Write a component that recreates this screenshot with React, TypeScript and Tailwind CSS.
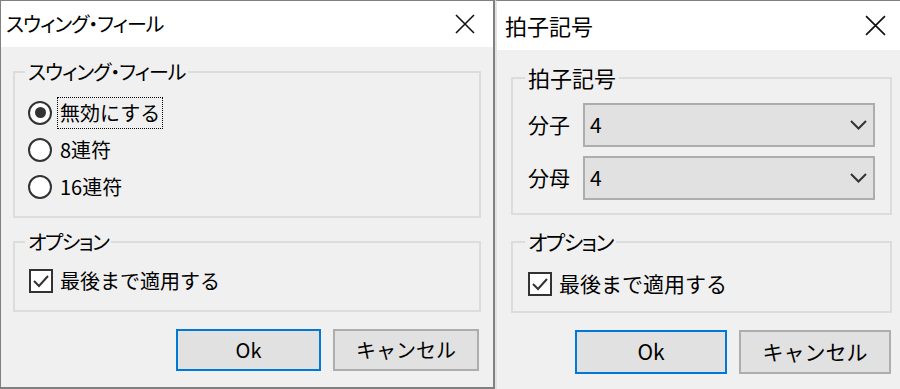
import React from "react";
import clsx from "clsx";

const jp = "font-['Noto_Sans_CJK_JP','Noto_Sans',sans-serif]";
const palt = "[font-feature-settings:'palt']";

const CloseIcon = ({ size }: { size: number }) => (
  <svg width={size} height={size} viewBox="0 0 20 20">
    <path d="M1 1 L19 19 M19 1 L1 19" stroke="#111" strokeWidth="1.6" fill="none" />
  </svg>
);

const Radio = ({ checked, label, focus }: { checked?: boolean; label: string; focus?: boolean }) => (
  <div className="flex h-[37px] items-center">
    <span className="flex h-[24px] w-[24px] items-center justify-center rounded-full border-2 border-[#333] bg-white">
      {checked && <span className="h-[11px] w-[11px] rounded-full bg-[#333]" />}
    </span>
    <span
      className={clsx(
        "ml-[5px] border px-[2px] leading-[30px]",
        focus ? "border-dotted border-black" : "border-transparent"
      )}
    >
      {label}
    </span>
  </div>
);

const Checkbox = ({ label, size }: { label: string; size: string }) => (
  <div className={clsx("flex items-center", size)}>
    <span className="flex h-[24px] w-[24px] items-center justify-center border-2 border-[#333] bg-white">
      <svg width="18" height="16" viewBox="0 0 18 16">
        <path d="M2 8 L7 13 L16 3" stroke="#333" strokeWidth="2" fill="none" />
      </svg>
    </span>
    <span className="ml-[7px]">{label}</span>
  </div>
);

const Combo = ({ label }: { label: string }) => (
  <div className="flex items-center">
    <span className="w-[55px]">{label}</span>
    <div className="flex h-[44px] flex-1 items-center justify-between border-2 border-[#adadad] bg-[#e1e1e1] pl-[5px] pr-[6px]">
      <span>4</span>
      <svg width="17" height="10" viewBox="0 0 17 10">
        <path d="M1 1 L8.5 8.5 L16 1" stroke="#333" strokeWidth="2" fill="none" />
      </svg>
    </div>
  </div>
);

export default function App() {
  return (
    <div className={clsx("flex h-[389px] w-[900px] overflow-hidden bg-[#f0f0f0] text-black", jp)}>
      {/* Swing feel dialog */}
      <div className="flex h-[389px] w-[495px] shrink-0 flex-col border-t border-l border-r-2 border-b-2 border-[#808080] text-[20px]">
        <div className="flex h-[46px] items-center justify-between bg-white pl-[5px] pr-[18px]">
          <span className={clsx("tracking-[-1px]", palt)}>スウィング・フィール</span>
          <CloseIcon size={20} />
        </div>

        <fieldset className="mx-[12px] mt-[13px] border-2 border-[#dcdcdc] pb-[11px] pl-[10px]">
          <legend className={clsx("px-[3px] leading-[24px] tracking-[-1px]", palt)}>スウィング・フィール</legend>
          <div className="pl-[3px] pt-[10px]">
            <Radio checked focus label="無効にする" />
            <Radio label="8連符" />
            <Radio label="16連符" />
          </div>
        </fieldset>

        <fieldset className="mx-[12px] mt-[12px] border-2 border-[#dcdcdc] pb-[11px] pl-[10px]">
          <legend className={clsx("px-[3px] leading-[24px] tracking-[-1.5px]", palt)}>オプション</legend>
          <div className="pl-[4px] pt-[8px]">
            <Checkbox label="最後まで適用する" size="h-[37px]" />
          </div>
        </fieldset>

        <div className="mt-[17px] flex justify-end gap-[12px] pr-[14px]">
          <button className="h-[42px] w-[145px] border-2 border-[#0078d7] bg-[#e1e1e1]">Ok</button>
          <button className="h-[42px] w-[146px] border-2 border-[#adadad] bg-[#e1e1e1]">キャンセル</button>
        </div>
      </div>

      {/* Time signature dialog */}
      <div className="flex h-[389px] flex-1 flex-col border-t border-l-2 border-t-[#808080] border-l-[#e2e2e2] text-[21px]">
        <div className="flex h-[49px] items-center justify-between bg-white pl-[8px] pr-[14px]">
          <span className="text-[22px]">拍子記号</span>
          <CloseIcon size={21} />
        </div>

        <fieldset className="ml-[14px] mr-[8px] mt-[15px] border-2 border-[#dcdcdc] pb-[13px] pl-[12px] pr-[15px]">
          <legend className="px-[3px] text-[22px] leading-[25px]">拍子記号</legend>
          <div className="flex flex-col gap-[9px] pl-[3px] pt-[13px]">
            <Combo label="分子" />
            <Combo label="分母" />
          </div>
        </fieldset>

        <fieldset className="ml-[14px] mr-[8px] mt-[14px] border-2 border-[#dcdcdc] pb-[8px] pl-[12px]">
          <legend className={clsx("px-[3px] leading-[25px] tracking-[-1.5px]", palt)}>オプション</legend>
          <div className="pl-[3px] pt-[10px]">
            <Checkbox label="最後まで適用する" size="h-[39px]" />
          </div>
        </fieldset>

        <div className="mt-[17px] flex justify-end gap-[12px] pr-[9px]">
          <button className="h-[44px] w-[152px] border-2 border-[#0078d7] bg-[#e1e1e1]">Ok</button>
          <button className="h-[44px] w-[152px] border-2 border-[#adadad] bg-[#e1e1e1]">キャンセル</button>
        </div>
      </div>
    </div>
  );
}
